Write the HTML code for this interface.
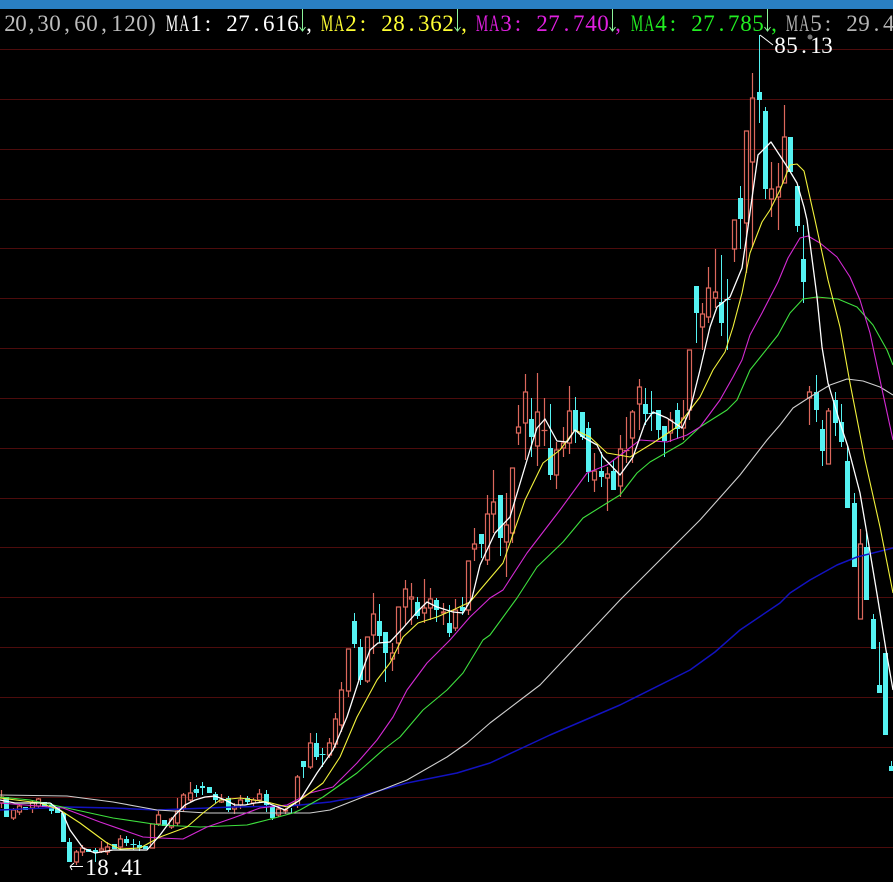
<!DOCTYPE html>
<html><head><meta charset="utf-8"><title>K-line chart</title>
<style>
html,body{margin:0;padding:0;background:#000;width:893px;height:882px;overflow:hidden}
svg{display:block}
text{font-family:"Liberation Serif","Noto Serif CJK SC",serif;font-size:23px;text-anchor:middle}
</style></head><body>
<svg width="893" height="882" viewBox="0 0 893 882" xmlns="http://www.w3.org/2000/svg">
<rect width="893" height="882" fill="#000"/>
<rect width="893" height="9" fill="#2a7fc2"/>
<path stroke="#4d0c0c" stroke-width="1" fill="none" d="M0 49.5H893M0 99.5H893M0 149.5H893M0 199.5H893M0 248.5H893M0 298.5H893M0 348.5H893M0 398.5H893M0 448.5H893M0 498.5H893M0 547.5H893M0 597.5H893M0 647.5H893M0 697.5H893M0 747.5H893M0 797.5H893M0 847.5H893"/>

<!-- red candles -->
<path stroke="#dc685c" stroke-width="1.2" fill="none" d="
M1.5 790V797M-.5 797h4V803h-4ZM1.5 803V808
M13.5 808V810M11.5 810h4V818h-4ZM13.5 818V820
M19.5 804V806M17.5 806h4V812h-4ZM19.5 812V815
M32.5 801V803M30.5 803h4V808h-4ZM32.5 808V813
M38.5 798V799M36.5 799h4V806h-4ZM38.5 806V808
M76.5 850V852M74.5 852h4V862h-4ZM76.5 862V865
M82.5 845V848M80.5 848h4V852h-4ZM82.5 852V856
M101.5 841V849M99.5 849h4V851h-4ZM101.5 851V853
M107.5 842V847M105.5 847h4V852h-4ZM107.5 852V855
M120.5 835V839M118.5 839h4V847h-4ZM120.5 847V850
M150.5 824h4V848h-4Z
M158.5 811V815M156.5 815h4V824h-4ZM158.5 824V826
M171.5 817V819M169.5 819h4V827h-4ZM171.5 827V829
M177.5 798V811M175.5 811h4V823h-4ZM177.5 823V826
M183.5 793V795M181.5 795h4V808h-4ZM183.5 808V812
M190.5 782V793M188.5 793h4V800h-4ZM190.5 800V802
M221.5 794V800M219.5 800h4V802h-4ZM221.5 802V803
M234.5 803V807M232.5 807h4V809h-4ZM234.5 809V814
M240.5 795V800M238.5 800h4V805h-4ZM240.5 805V809
M253.5 798V800M251.5 800h4V803h-4ZM253.5 803V806
M259.5 789V794M257.5 794h4V800h-4ZM259.5 800V803
M278.5 807V809M276.5 809h4V815h-4ZM278.5 815V817
M285.5 808V810M283.5 810h4V811h-4ZM285.5 811V814
M297.5 775V777M295.5 777h4V805h-4ZM297.5 805V808
M310.5 733V743M308.5 743h4V767h-4ZM310.5 767V769
M329.5 738V743M327.5 743h4V755h-4ZM329.5 755V758
M335.5 713V719M333.5 719h4V744h-4ZM335.5 744V748
M341.5 682V690M339.5 690h4V725h-4ZM341.5 725V732
M348.5 649V649M346.5 649h4V691h-4ZM348.5 691V697
M367.5 637V637M365.5 637h4V681h-4ZM367.5 681V683
M373.5 593V614M371.5 614h4V635h-4ZM373.5 635V654
M392.5 643V653M390.5 653h4V659h-4ZM392.5 659V671
M398.5 607V607M396.5 607h4V643h-4ZM398.5 643V654
M405.5 580V589M403.5 589h4V607h-4ZM405.5 607V625
M411.5 583V597M409.5 597h4V599h-4ZM411.5 599V625
M424.5 579V608M422.5 608h4V613h-4ZM424.5 613V623
M430.5 588V599M428.5 599h4V608h-4ZM430.5 608V620
M443.5 603V612M441.5 612h4V613h-4ZM443.5 613V625
M455.5 599V610M453.5 610h4V628h-4ZM455.5 628V631
M468.5 561V561M466.5 561h4V610h-4ZM468.5 610V615
M474.5 528V544M472.5 544h4V549h-4ZM474.5 549V561
M487.5 495V514M485.5 514h4V560h-4ZM487.5 560V565
M493.5 470V502M491.5 502h4V514h-4ZM493.5 514V533
M506.5 493V525M504.5 525h4V542h-4ZM506.5 542V577
M512.5 468V468M510.5 468h4V533h-4ZM512.5 533V543
M518.5 405V427M516.5 427h4V433h-4ZM518.5 433V445
M525.5 374V392M523.5 392h4V423h-4ZM525.5 423V460
M537.5 373V412M535.5 412h4V446h-4ZM537.5 446V466
M544.5 398V446M541.5 430.5h6
M556.5 442V450M554.5 450h4V475h-4ZM556.5 475V489
M563.5 427V443M561.5 443h4V448h-4ZM563.5 448V457
M569.5 386V411M567.5 411h4V443h-4ZM569.5 443V454
M594.5 453V471M592.5 471h4V480h-4ZM594.5 480V492
M607.5 467V474M605.5 474h4V478h-4ZM607.5 478V511
M620.5 435V449M618.5 449h4V486h-4ZM620.5 486V497
M626.5 417V449M623.5 450.5h6M626.5 451V463
M632.5 410V412M630.5 412h4V438h-4ZM632.5 438V463
M639.5 379V387M637.5 387h4V404h-4ZM639.5 404V430
M670.5 412V420M668.5 420h4V433h-4ZM670.5 433V442
M683.5 400V418M681.5 418h4V428h-4ZM683.5 428V440
M689.5 350V350M687.5 350h4V410h-4ZM689.5 410V420
M702.5 303V314M700.5 314h4V327h-4ZM702.5 327V350
M708.5 267V288M706.5 288h4V317h-4ZM708.5 317V323
M715.5 249V292M713.5 292h4V298h-4ZM715.5 298V308
M734.5 220V220M732.5 220h4V249h-4ZM734.5 249V262
M746.5 131V131M744.5 131h4V223h-4ZM746.5 223V273
M752.5 73V98M750.5 98h4V162h-4ZM752.5 162V247
M771.5 162V189M769.5 189h4V199h-4ZM771.5 199V217
M778.5 163V187M776.5 187h4V197h-4ZM778.5 197V230
M784.5 105V137M782.5 137h4V183h-4Z
M809.5 386V392M807.5 392h4V398h-4ZM809.5 398V425
M828.5 408V411M826.5 411h4V464h-4Z
M860.5 529V544M858.5 544h4V619h-4Z"/>

<!-- cyan wicks -->
<path stroke="#55f2f2" stroke-width="1" fill="none" d="
M51.500 803V814M69.500 838V842M95.500 848V862M133.500 839V850M130.500 844.500h6M126.500 836V846M139.500 841V851
M196.500 785V797M193 791h6M202.500 782V795M215.500 792V803M228.500 796V812M247.500 796V804M266.500 790V812M272.500 805V820
M291.500 808V814M303.500 761V778M316.500 733V760M322.500 748V767M319.500 754.500h6M354.500 613V648M360.500 639V685M379.500 604V643M385.500 632V682M417.500 597V619M436.500 598V622M449.500 605V637M462.500 597V615M481.500 534V558M500.500 495V556M531.500 398V457M550.500 404V480M575.500 397V443M582.500 412V440M588.500 422V482M601.500 452V487M613.500 460V490M645.500 388V425M651.500 391V431M648.500 413.500h6M658.500 410V439M664.500 426V457M677.500 403V439M696.500 286V343M721.500 255V336M727.500 279V350M724.500 299.500h6M740.500 186V249M759.500 35V123M765.500 107V199M797.500 186V232M803.500 225V303M816.500 375V422M822.500 420V466M835.500 392V436M841.500 404V447M847.500 445V461M854.500 493V503M866.500 533V547M873.500 614V619M879.500 642V685M891.500 761V771"/>
<!-- cyan bodies -->
<path stroke="#55f2f2" stroke-width="5" fill="none" d="
M6.500 797V817M25.500 807V810M44.500 802V807M51.500 805V811M57.500 808V813M63.500 813V842M69.500 842V862M88.500 849V852M95.500 850V853M114.500 844V849M126.500 839V843M139.500 845V848M145.500 846V849M164.500 820V826M196.500 789V793M202.500 786V788M209.500 787V793M215.500 794V800M228.500 798V810M247.500 798V802M266.500 794V805M272.500 807V818M303.500 761V767M316.500 743V757M354.500 621V644M360.500 647V680M379.500 621V636M385.500 632V653M417.500 602V616M436.500 600V610M449.500 623V633M462.500 607V611M481.500 534V544M500.500 495V538M531.500 419V437M550.500 448V475M575.500 410V431M582.500 412V437M588.500 428V472M601.500 471V477M613.500 471V490M645.500 404V414M658.500 410V430M664.500 426V441M677.500 410V429M696.500 286V313M721.500 302V323M740.500 198V219M759.500 92V100M765.500 111V189M790.500 137V172M797.500 186V226M803.500 259V282M816.500 392V410M822.500 429V451M835.500 400V423M841.500 422V442M847.500 461V508M854.500 503V567M866.500 547V600M873.500 619V649M879.500 685V693M885.500 653V735M891.500 766V771"/>

<!-- MA lines -->
<g fill="none" stroke-width="1.1" stroke-linejoin="round">
<polyline stroke="#1212c0" stroke-width="1.5" points="0,810 67,807 113,808 157,810 233,807 290,806 330,802 357,797 407,783 457,773 490,763 550,735 620,705 690,670 715,652 740,630 780,603 790,593 810,580 837,565 857,557 893,548"/>
<polyline stroke="#cfcfcf" points="0,795 67,796 113,802 157,810 207,813 267,813 310,813 330,810 363,797 407,780 447,757 467,743 490,723 540,685 620,600 700,520 740,475 767,440 780,425 793,408 810,397 830,385 847,379 863,381 880,387 893,395"/>
<polyline stroke="#3ee03e" points="0,797 30,800 67,808 113,818 160,825 200,827 247,825 267,820 293,813 300,810 323,797 357,773 383,750 400,737 423,710 447,690 463,673 483,640 490,635 517,598 537,567 563,542 583,518 607,503 620,495 637,473 650,462 683,443 700,427 727,410 737,400 750,370 778,335 790,313 803,299 817,297 838,299 857,307 873,325 887,350 893,365"/>
<polyline stroke="#d42ad4" points="0,803 63,808 100,822 143,837 160,838 183,839 207,827 233,818 260,808 287,805 310,793 333,787 357,763 377,740 393,717 407,690 427,663 450,640 470,617 490,598 503,590 527,553 560,510 587,473 607,465 627,450 640,440 667,442 687,435 700,427 720,400 733,377 742,360 750,335 762,313 778,282 788,258 800,238 808,236 820,243 837,257 850,277 860,300 870,333 880,380 893,440"/>
<polyline stroke="#f2f23c" points="0,798 40,803 60,810 80,823 107,843 120,849 140,848 160,837 187,827 203,813 220,800 240,798 267,802 287,807 300,800 323,783 340,757 357,717 377,680 390,663 403,637 418,623 437,617 453,610 470,602 480,590 503,563 525,500 543,463 560,450 575,430 590,437 607,453 630,457 653,443 677,427 700,397 713,370 725,352 733,327 742,293 750,253 762,222 770,210 780,190 790,165 797,164 804,171 815,220 828,280 840,327 850,383 865,460 880,527 893,593"/>
<polyline stroke="#ffffff" stroke-width="1.3" points="0,800 15,803 50,803 62,812 70,830 83,848 95,853 113,850 147,850 160,835 175,815 185,805 195,800 205,797 215,796 225,800 235,805 245,805 255,803 265,802 275,806 285,810 300,800 317,773 333,750 347,717 360,677 370,650 378,643 390,642 403,628 417,612 427,602 437,607 453,612 463,613 472,598 480,565 495,533 510,517 530,450 537,428 545,419 557,441 567,442 575,430 583,437 597,445 603,457 620,475 633,457 645,423 653,412 667,418 682,428 690,410 700,370 710,327 717,307 730,297 742,268 748,227 758,155 771,142 788,168 797,183 804,207 807,220 817,297 822,347 828,383 840,423 848,447 860,493 868,540 878,600 886,650 893,690"/>
</g>

<!-- header text -->
<text y="31" fill="#bdbdbd" x="10 21 31.5 43 55 67 80 92 104 117 130 142 152">20,30,60,120)</text>

<text transform="translate(172,31) scale(.6,1)" fill="#ffffff" x="0 20.3">MA</text>
<text y="31" fill="#ffffff" x="196 208">1:</text>
<text y="31" fill="#ffffff" x="232 244 256.500 268.700 281 293">27.616</text>
<text y="31" fill="#ffffff" x="309">,</text>

<text transform="translate(327,31) scale(.6,1)" fill="#ffff33" x="0 20.3">MA</text>
<text y="31" fill="#ffff33" x="351 363">2:</text>
<text y="31" fill="#ffff33" x="387 399 411.500 423.700 436 448">28.362</text>
<text y="31" fill="#ffff33" x="464">,</text>

<text transform="translate(482,31) scale(.6,1)" fill="#e020e0" x="0 20.3">MA</text>
<text y="31" fill="#e020e0" x="506 518">3:</text>
<text y="31" fill="#e020e0" x="542 554 566.500 578.700 591 603">27.740</text>
<text y="31" fill="#e020e0" x="618">,</text>

<text transform="translate(637,31) scale(.6,1)" fill="#22ee22" x="0 20.3">MA</text>
<text y="31" fill="#22ee22" x="661 673">4:</text>
<text y="31" fill="#22ee22" x="697 709 721.500 733.700 746 758">27.785</text>
<text y="31" fill="#22ee22" x="774">,</text>

<text transform="translate(792,31) scale(.6,1)" fill="#b5b5b5" x="0 20.3">MA</text>
<text y="31" fill="#b5b5b5" x="816 828">5:</text>
<text y="31" fill="#b5b5b5" x="852 864 876.500 888.700">29.4</text>

<!-- arrows -->
<path stroke="#8cf59a" stroke-width="1" fill="none" d="M302.500 9V31M299.500 27L302.500 31L305.500 27M457.500 9V31M454.500 27L457.500 31L460.500 27M612.500 9V31M609.500 27L612.500 31L615.500 27M767.500 9V31M764.500 27L767.500 31L770.500 27"/>

<!-- labels -->
<path stroke="#ffffff" stroke-width="1" fill="none" d="M760 35L773 45M70 866.500H83M70 866.500L74 863M70 866.500L72 870"/>
<text y="53" fill="#ffffff" x="780 792 804 816 827">85.13</text>
<text y="875" fill="#ffffff" x="91 103 116 127 137">18.41</text>
<circle cx="810" cy="37" r="2.500" fill="#777"/>
</svg>
</body></html>
